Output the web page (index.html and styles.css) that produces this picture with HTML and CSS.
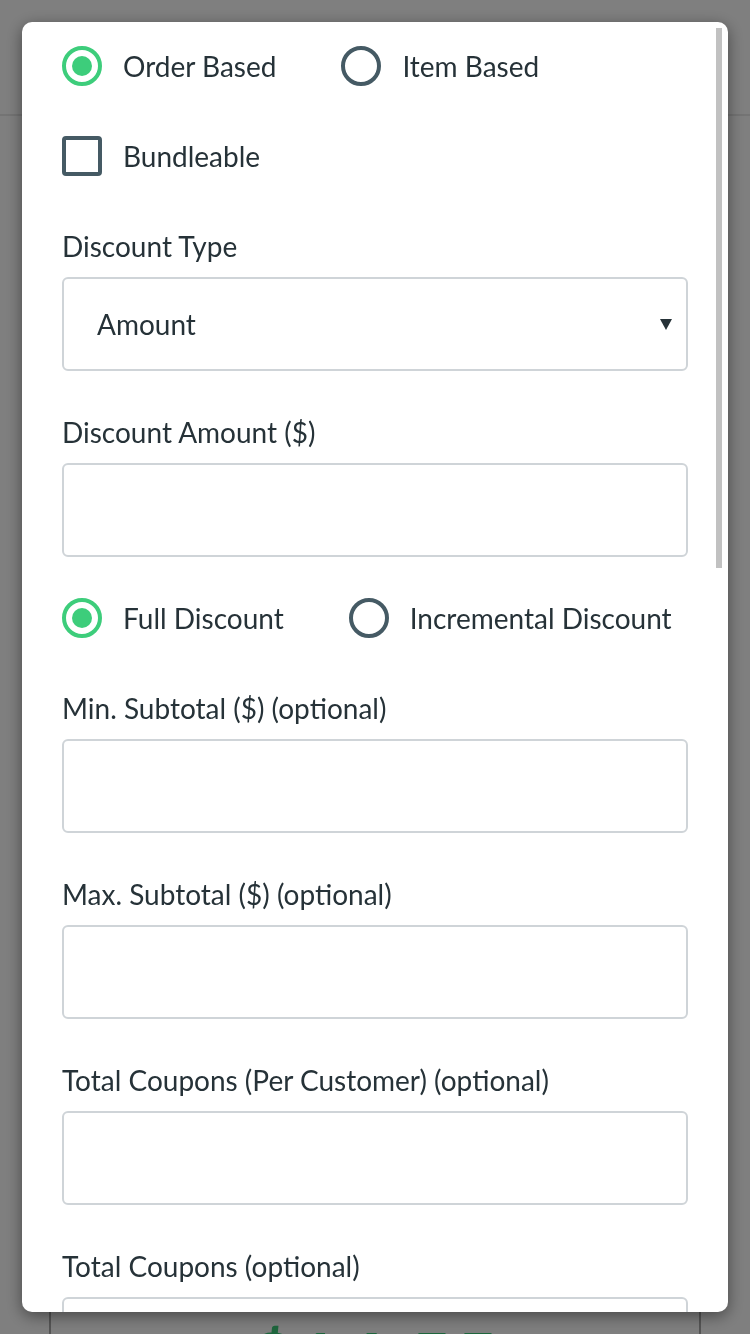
FILE: index.html
```html
<!DOCTYPE html>
<html lang="en">
<head>
<meta charset="utf-8">
<title>Coupon</title>
<link rel="stylesheet" href="styles.css">
</head>
<body>
<div class="page">
  <header class="page-header"></header>
  <main class="page-main">
    <div class="page-card">
      <div class="price">$14.55</div>
    </div>
  </main>
</div>
<div class="overlay"></div>
<div class="modal">
  <div class="modal-body">
    <div class="option-row">
      <label class="option"><span class="radio checked"></span><span class="option-text">Order Based</span></label>
      <label class="option"><span class="radio"></span><span class="option-text">Item Based</span></label>
    </div>
    <div class="option-row">
      <label class="option"><span class="checkbox"></span><span class="option-text">Bundleable</span></label>
    </div>
    <div class="field">
      <div class="field-label">Discount Type</div>
      <div class="select">
        <span>Amount</span>
        <svg class="caret" width="12" height="11" viewBox="0 0 12 11"><polygon points="0,0 12,0 6,11" fill="#263238"/></svg>
      </div>
    </div>
    <div class="field">
      <div class="field-label">Discount Amount ($)</div>
      <input class="text-input" type="text">
    </div>
    <div class="option-row">
      <label class="option"><span class="radio checked"></span><span class="option-text">Full Discount</span></label>
      <label class="option"><span class="radio"></span><span class="option-text">Incremental Discount</span></label>
    </div>
    <div class="field">
      <div class="field-label">Min. Subtotal ($) (optional)</div>
      <input class="text-input" type="text">
    </div>
    <div class="field">
      <div class="field-label">Max. Subtotal ($) (optional)</div>
      <input class="text-input" type="text">
    </div>
    <div class="field">
      <div class="field-label">Total Coupons (Per Customer) (optional)</div>
      <input class="text-input" type="text">
    </div>
    <div class="field">
      <div class="field-label">Total Coupons (optional)</div>
      <input class="text-input" type="text">
    </div>
  </div>
  <div class="scroll-thumb"></div>
</div>
</body>
</html>
```

FILE: styles.css
```css
html, body {
  margin: 0;
  padding: 0;
  width: 750px;
  height: 1334px;
  overflow: hidden;
  background: #ffffff;
  font-family: Lato, "Open Sans", sans-serif;
}

.page {
  width: 750px;
  height: 1334px;
  overflow: hidden;
}

.page-header {
  height: 114px;
  border-bottom: 2px solid #e8e8e8;
}

.page-main {
  padding: 0 49px;
}

.page-card {
  margin-top: 1150px;
  height: 68px;
  border-left: 2px solid #aaaaaa;
  border-right: 2px solid #aaaaaa;
  box-sizing: border-box;
  text-align: center;
  padding-top: 56px;
}

.price {
  color: #3dcd7b;
  font-size: 74px;
  font-weight: 900;
  line-height: 74px;
  letter-spacing: 3px;
}

.overlay {
  position: fixed;
  inset: 0;
  background: rgba(0, 0, 0, 0.5);
}

.modal {
  position: fixed;
  left: 22px;
  top: 22px;
  width: 706px;
  height: 1290px;
  background: #ffffff;
  border-radius: 10px;
  overflow: hidden;
  box-shadow: 0 4px 16px rgba(0, 0, 0, 0.45);
}

.modal-body {
  padding: 24px 40px;
  display: flex;
  flex-direction: column;
  color: #263238;
}

.option-row {
  display: flex;
  align-items: center;
  height: 40px;
  margin-bottom: 50px;
}

.option {
  display: flex;
  align-items: center;
  gap: 21px;
  margin-right: 65px;
  white-space: nowrap;
  flex-shrink: 0;
}

.option-text {
  font-size: 28px;
  line-height: 40px;
}

.radio {
  width: 40px;
  height: 40px;
  box-sizing: border-box;
  border: 4px solid #455a64;
  border-radius: 50%;
  display: flex;
  align-items: center;
  justify-content: center;
  flex-shrink: 0;
}

.radio.checked {
  border-color: #3dcd7b;
}

.radio.checked::after {
  content: "";
  width: 20px;
  height: 20px;
  border-radius: 50%;
  background: #3dcd7b;
}

.checkbox {
  width: 40px;
  height: 40px;
  box-sizing: border-box;
  border: 4px solid #455a64;
  border-radius: 4px;
  flex-shrink: 0;
}

.field {
  display: flex;
  flex-direction: column;
  margin-bottom: 41px;
}

.field-label {
  font-size: 28px;
  line-height: 40px;
  margin-bottom: 11px;
  white-space: nowrap;
}

.select,
.text-input {
  width: 100%;
  height: 94px;
  box-sizing: border-box;
  border: 2px solid #cfd4d8;
  border-radius: 6px;
  background: #ffffff;
  margin: 0;
}

.select {
  display: flex;
  align-items: center;
  justify-content: space-between;
  padding: 0 14px 0 33px;
  font-size: 28px;
}

.caret {
  display: block;
}

.text-input {
  font-family: inherit;
  font-size: 28px;
  padding: 0 33px;
  outline: none;
}

.scroll-thumb {
  position: absolute;
  right: 6px;
  top: 6px;
  width: 6px;
  height: 540px;
  background: #c1c1c1;
}
```
